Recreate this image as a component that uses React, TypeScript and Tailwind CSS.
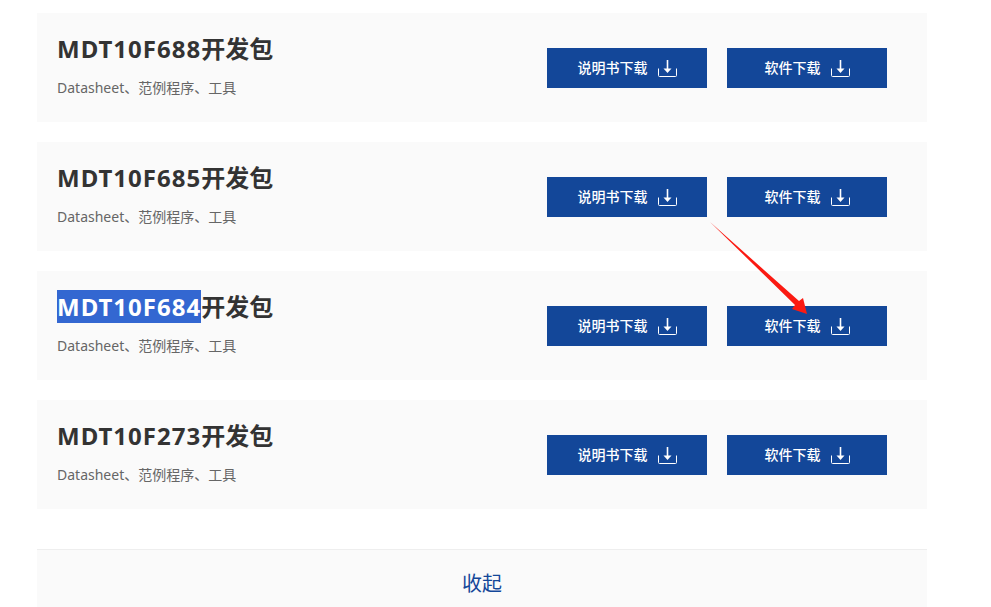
const products = ["MDT10F688", "MDT10F685", "MDT10F684", "MDT10F273"];

const fontStack = "font-['Noto_Sans','Noto_Sans_CJK_SC',sans-serif]";

function DownloadIcon() {
    return (
        <svg width="19" height="17" viewBox="0 0 19 17" fill="none" className="block shrink-0 mt-[1px]">
            <path d="M0.5 8.5V15.5Q0.5 16.5 1.5 16.5H17.5Q18.5 16.5 18.5 15.5V8.5" stroke="white" strokeWidth="1" />
            <path d="M9.5 0V9" stroke="white" strokeWidth="1.6" />
            <path d="M5.5 8.5H13.5L9.5 13Z" fill="white" />
        </svg>
    );
}

function DownloadButton({ label }: { label: string }) {
    return (
        <a className="w-40 h-10 bg-[#134799] flex items-center justify-center gap-[10px] text-white text-sm font-medium cursor-pointer">
            <span>{label}</span>
            <DownloadIcon />
        </a>
    );
}

function ProductRow({ name, selected }: { name: string, selected?: boolean }) {
    return (
        <div className="h-[109px] bg-[#fafafa] flex items-center justify-between pl-5 pr-10">
            <div className="pb-[2px]">
                <h3 className="text-2xl font-bold text-[#333] leading-[30px] -mt-[1px] mb-[1px]">
                    <span className={selected ? "bg-[#3367d1] text-white tracking-[1px]" : "tracking-[1px]"}>{name}</span>开发包
                </h3>
                <p className="mt-[14px] text-sm leading-5 text-[#666]">Datasheet、范例程序、工具</p>
            </div>
            <div className="flex gap-5 pt-[1px]">
                <DownloadButton label="说明书下载" />
                <DownloadButton label="软件下载" />
            </div>
        </div>
    );
}

export default function App() {
    return (
        <div className={`relative w-[991px] h-[607px] overflow-hidden bg-white ${fontStack}`}>
            <div className="w-[890px] ml-[37px] pt-[13px]">
                <div className="flex flex-col gap-5">
                    {products.map(name => (
                        <ProductRow key={name} name={name} selected={name === "MDT10F684"} />
                    ))}
                </div>
                <div className="mt-10 h-[68px] bg-[#fafafa] border-t border-[#eeeeee] flex items-center justify-center">
                    <span className="text-xl text-[#134799]">收起</span>
                </div>
            </div>

            {/* annotation arrow drawn over the page */}
            <svg className="absolute left-[708px] top-[218px]" width="104" height="100" viewBox="0 0 104 100" fill="none">
                <path d="M2 4L91 83L95 80L99 96L84 91L87 87Z" fill="#fb1a12" />
            </svg>
        </div>
    );
}
